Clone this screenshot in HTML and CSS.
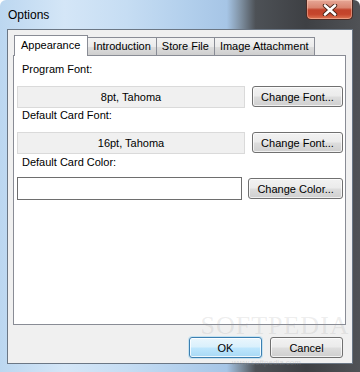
FILE: index.html
```html
<!DOCTYPE html>
<html lang="en">
<head>
    <meta charset="UTF-8">
    <title>Options</title>
    <link rel="stylesheet" href="styles.css">
</head>
<body>
    <div class="window">
        <div class="titlebar">
            <span class="title">Options</span>
            <button class="close" title="Close">
                <svg width="16" height="12" viewBox="0 0 16 12">
                    <path d="M3 1.5 L13 10.5 M13 1.5 L3 10.5" stroke="#4a2418" stroke-width="4.4" stroke-linecap="round"/>
                    <path d="M3 1.5 L13 10.5 M13 1.5 L3 10.5" stroke="#ffffff" stroke-width="2.6" stroke-linecap="round"/>
                </svg>
            </button>
        </div>

        <div class="client">
            <div class="tabs">
                <div class="tab active">Appearance</div>
                <div class="tab">Introduction</div>
                <div class="tab">Store File</div>
                <div class="tab">Image Attachment</div>
            </div>

            <div class="panel">
                <div class="label first">Program Font:</div>
                <div class="row">
                    <div class="field readonly">8pt, Tahoma</div>
                    <button class="btn">Change Font...</button>
                </div>

                <div class="label">Default Card Font:</div>
                <div class="row">
                    <div class="field readonly">16pt, Tahoma</div>
                    <button class="btn">Change Font...</button>
                </div>

                <div class="label last">Default Card Color:</div>
                <div class="row color-row">
                    <div class="field color"></div>
                    <button class="btn">Change Color...</button>
                </div>
            </div>

            <div class="actions">
                <button class="btn default">OK</button>
                <button class="btn">Cancel</button>
            </div>
        </div>

        <!-- screenshot watermark -->
        <div class="watermark">
            <span class="wm-big">SOFTPEDIA</span>
        </div>
        <span class="wm-small">www.softpedia.com</span>
    </div>
</body>
</html>
```

FILE: styles.css
```css
* {
    box-sizing: border-box;
}

body {
    margin: 0;
    padding: 0;
    background-color: #ffffff;
    font-family: "Liberation Sans", Arial, sans-serif;
    font-size: 11px;
    color: #000000;
}

.window {
    position: relative;
    width: 360px;
    height: 372px;
    display: flex;
    flex-direction: column;
    padding: 0 7px 8px 7px;
    border-radius: 6px 6px 0 0;
    background: linear-gradient(90deg, #bcd7f0 0%, #d4e6f7 18%, #c6ddf3 35%, #b2cfec 52%, #a6c5e6 63%, #7d8e9f 67%, #4d5156 71%, #3e4044 85%, #505256 100%);
    overflow: hidden;
}

.titlebar {
    height: 29px;
    display: flex;
    align-items: flex-start;
    justify-content: space-between;
    flex-shrink: 0;
}

.title {
    font-size: 12px;
    margin: 8px 0 0 1px;
    line-height: 14px;
}

.close {
    width: 47px;
    height: 20px;
    margin: 0;
    padding: 0;
    display: flex;
    align-items: center;
    justify-content: center;
    border: 1px solid #4a2a24;
    border-top: none;
    border-radius: 0 0 5px 5px;
    background: linear-gradient(180deg, #e6a796 0%, #d98570 40%, #c2432b 52%, #c5452c 75%, #dd7553 100%);
    box-shadow: inset 0 0 0 1px rgba(255, 210, 190, 0.45);
}

.client {
    flex: 1;
    display: flex;
    flex-direction: column;
    border: 1px solid #6b7785;
    background-color: #f0f0f0;
    padding: 5px 6px 0 5px;
}

.tabs {
    display: flex;
    align-items: flex-end;
    height: 20px;
    padding-left: 1px;
    position: relative;
    z-index: 1;
}

.tab {
    height: 18px;
    line-height: 16px;
    padding: 0 5px;
    border: 1px solid #898c95;
    border-bottom: none;
    margin-left: -1px;
    background: linear-gradient(180deg, #f3f3f3 0%, #ebebeb 50%, #dddddd 51%, #cfcfcf 100%);
}

.tab.active {
    height: 21px;
    margin-left: 0;
    margin-bottom: -1px;
    padding: 1px 7px 0 6px;
    background: #ffffff;
    position: relative;
    z-index: 2;
}

.panel {
    height: 270px;
    border: 1px solid #898c95;
    background-color: #ffffff;
    padding: 0 2px 0 3px;
}

.label {
    height: 14px;
    line-height: 14px;
    padding-left: 5px;
}

.label.first {
    margin-top: 6px;
    margin-bottom: 10px;
}

.row {
    display: flex;
    align-items: flex-start;
    gap: 7px;
    height: 22px;
}

.row + .label {
    margin-bottom: 10px;
}

.label.last {
    margin-top: 1px;
    margin-bottom: 8px;
}

.color-row {
    height: 23px;
    gap: 6px;
}

.field {
    height: 22px;
    line-height: 20px;
    text-align: center;
}

.field.readonly {
    width: 228px;
    background-color: #f0f0f0;
    border: 1px solid #dadada;
}

.field.color {
    width: 226px;
    height: 23px;
    background-color: #ffffff;
    border: 1px solid #6e6e6e;
}

.btn {
    height: 21px;
    width: 91px;
    margin: 0;
    padding: 0;
    font-family: "Liberation Sans", Arial, sans-serif;
    font-size: 11px;
    color: #000000;
    border: 1px solid #707070;
    border-radius: 3px;
    background: linear-gradient(180deg, #f2f2f2 0%, #ebebeb 48%, #dddddd 52%, #cfcfcf 100%);
    box-shadow: inset 0 0 0 1px rgba(255, 255, 255, 0.7);
}

.color-row .btn {
    width: 95px;
    margin-top: 1px;
}

.actions {
    display: flex;
    justify-content: flex-end;
    gap: 8px;
    margin-top: 12px;
    padding-right: 3px;
}

.actions .btn {
    width: 73px;
}

.btn.default {
    border-color: #3c7fb1;
    background: linear-gradient(180deg, #eaf6fd 0%, #d9f0fc 48%, #bee6fd 52%, #a7d9f5 100%);
    box-shadow: inset 0 0 0 1px rgba(255, 255, 255, 0.8), 0 0 0 1px rgba(120, 200, 240, 0.35);
}

.watermark {
    position: absolute;
    left: 205px;
    top: 312px;
    width: 140px;
    display: flex;
    justify-content: center;
    pointer-events: none;
    color: rgba(150, 150, 150, 0.18);
}

.wm-big {
    font-family: "Liberation Serif", serif;
    font-size: 26px;
    letter-spacing: 1px;
    line-height: 28px;
}

.wm-small {
    position: absolute;
    left: 232px;
    top: 358px;
    font-size: 8px;
    line-height: 9px;
    color: rgba(150, 150, 150, 0.3);
    pointer-events: none;
}
```
